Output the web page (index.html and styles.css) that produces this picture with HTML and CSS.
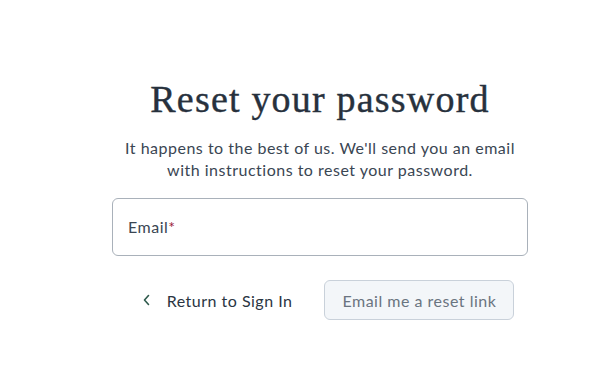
FILE: index.html
```html
<!DOCTYPE html>
<html lang="en">
<head>
  <meta charset="UTF-8">
  <meta name="viewport" content="width=device-width, initial-scale=1.0">
  <title>Reset your password</title>
  <link rel="stylesheet" href="styles.css">
</head>
<body>
  <div class="page">
    <h1 class="title">Reset your password</h1>
    <p class="lead">It happens to the best of us. We'll send you an email with instructions to reset your password.</p>
    <form class="reset-form">
      <label class="field">
        <span class="field-label">Email<span class="req">*</span></span>
        <input type="email" class="field-input">
      </label>
      <div class="actions">
        <button type="button" class="btn-back">
          <svg width="10" height="12" viewBox="0 0 10 12"><path d="M6.5 1.5 L2.5 6 L6.5 10.5" fill="none" stroke="#2f5a4c" stroke-width="1.6" stroke-linecap="round" stroke-linejoin="round"/></svg>
          Return to Sign In
        </button>
        <button type="submit" class="btn-submit" disabled>Email me a reset link</button>
      </div>
    </form>
  </div>
</body>
</html>
```

FILE: styles.css
```css
* {
  margin: 0;
  padding: 0;
  box-sizing: border-box;
}
body {
  font-family: Lato, 'Noto Sans', sans-serif;
  background: #fff;
  color: #2a3542;
  letter-spacing: 0.5px;
}
.page {
  width: 416px;
  margin-left: 112px;
  padding-top: 74px;
  text-align: center;
}
.title {
  font-family: 'Liberation Serif', serif;
  font-weight: normal;
  font-size: 38px;
  line-height: 50px;
  color: #27313d;
  letter-spacing: 1.2px;
  -webkit-text-stroke: 0.4px #27313d;
}
.lead {
  margin-top: 13px;
  font-size: 16px;
  line-height: 22px;
  color: #3a4653;
  padding: 0 10px;
}
.reset-form {
  margin-top: 17px;
}
.field {
  position: relative;
  display: block;
  height: 58px;
}
.field-input {
  width: 100%;
  height: 100%;
  border: 1px solid #a9b1ba;
  border-radius: 6px;
  outline: none;
  background: #fff;
}
.field-label {
  position: absolute;
  left: 16px;
  top: 19px;
  font-size: 16px;
  line-height: 20px;
  color: #3a4653;
}
.req {
  color: #9b1c3a;
}
.actions {
  display: flex;
  justify-content: center;
  gap: 16px;
  margin-top: 24px;
}
.btn-back {
  display: flex;
  align-items: center;
  gap: 15px;
  height: 40px;
  padding: 0 16px;
  border: none;
  background: none;
  font-family: inherit;
  font-size: 16px;
  letter-spacing: inherit;
  color: #2a3542;
  cursor: pointer;
}
.btn-submit {
  height: 40px;
  padding: 0 17px;
  border: 1px solid #c9d1da;
  border-radius: 6px;
  background: #f3f6f9;
  font-family: inherit;
  font-size: 16px;
  letter-spacing: inherit;
  color: #6a7480;
}
```
